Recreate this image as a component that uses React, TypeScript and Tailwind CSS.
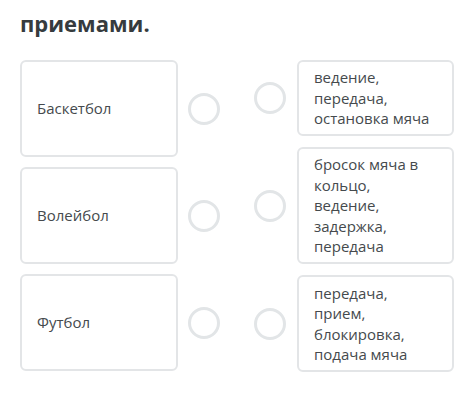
import React from "react";

const font = { fontFamily: '"Open Sans", "Noto Sans", sans-serif' };

function Circle() {
  return <div className="w-[32px] h-[32px] rounded-full border-[3px] border-[#e2e5e7] bg-white shrink-0" />;
}

export default function App() {
  const left = ["Баскетбол", "Волейбол", "Футбол"];
  const right = [
    { text: "ведение, передача, остановка мяча", h: "h-[76px]" },
    { text: "бросок мяча в кольцо, ведение, задержка, передача", h: "h-[117px]" },
    { text: "передача, прием, блокировка, подача мяча", h: "h-[97px]" },
  ];
  return (
    <div className="w-[472px] h-[418px] bg-white overflow-hidden text-[#454a4d]" style={font}>
      <div className="pl-[20px] pt-[9px] text-[22px] leading-[28px] font-bold text-[#363b3e]">приемами.</div>
      <div className="flex pl-[20px] pt-[23px]">
        <div className="flex flex-col gap-[10px]">
          {left.map((t) => (
            <div key={t} className="flex items-center gap-[10px]">
              <div className="w-[158px] h-[97px] rounded-[6px] border-2 border-[#e3e5e7] flex items-center px-[15px] text-[15px]">
                {t}
              </div>
              <Circle />
            </div>
          ))}
        </div>
        <div className="flex flex-col gap-[11px] ml-[34px]">
          {right.map((r) => (
            <div key={r.text} className="flex items-center gap-[11px]">
              <Circle />
              <div className={`w-[157px] ${r.h} rounded-[6px] border-2 border-[#e3e5e7] flex items-center px-[15px] text-[15px] leading-[20.5px]`}>
                <span>{r.text}</span>
              </div>
            </div>
          ))}
        </div>
      </div>
    </div>
  );
}
